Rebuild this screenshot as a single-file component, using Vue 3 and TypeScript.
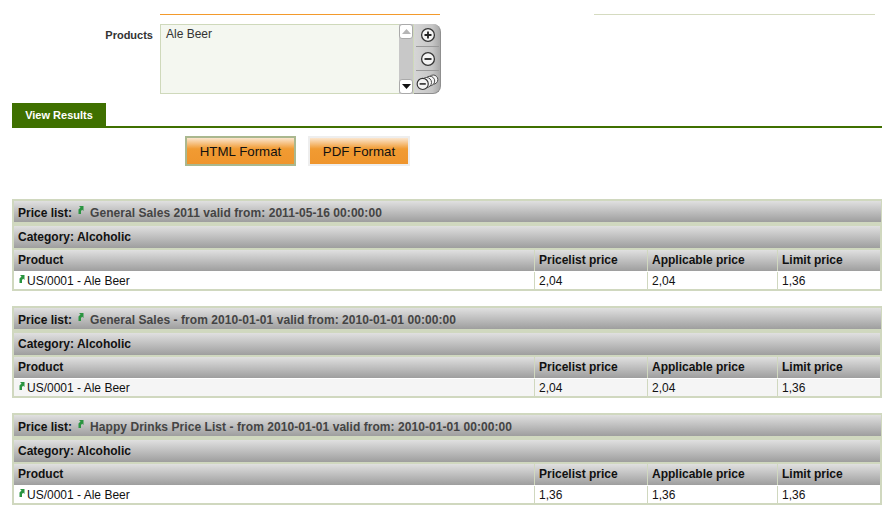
<script setup lang="ts">
interface PriceList { name: string; from: string; price: string; applicable: string; limit: string; shaded?: boolean }
const lists: PriceList[] = [
  { name: 'General Sales 2011', from: '2011-05-16 00:00:00', price: '2,04', applicable: '2,04', limit: '1,36' },
  { name: 'General Sales - from 2010-01-01', from: '2010-01-01 00:00:00', price: '2,04', applicable: '2,04', limit: '1,36', shaded: true },
  { name: 'Happy Drinks Price List - from 2010-01-01', from: '2010-01-01 00:00:00', price: '1,36', applicable: '1,36', limit: '1,36' },
]
</script>

<template>
  <div class="page">
    <div class="top-lines">
      <div class="line-orange"></div>
      <div class="line-pale"></div>
    </div>
    <div class="field">
      <label class="field-label">Products</label>
      <div class="listbox">
        <div class="listbox-text">Ale Beer</div>
        <div class="scroll">
          <div class="scroll-btn"><svg width="9" height="5" viewBox="0 0 9 5"><path d="M4.5 0 9 5H0z" fill="#b5b5b5"/></svg></div>
          <div class="scroll-track"></div>
          <div class="scroll-btn"><svg width="9" height="5" viewBox="0 0 9 5"><path d="M0 0h9L4.5 5z" fill="#111"/></svg></div>
        </div>
      </div>
      <div class="tools">
        <div class="tool">
          <svg width="16" height="16" viewBox="0 0 16 16"><circle cx="8" cy="8" r="6.400" fill="#f4f4f4" stroke="#333" stroke-width="1.300"/><path d="M4.500 8h7M8 4.500v7" stroke="#222" stroke-width="1.800"/></svg>
        </div>
        <div class="tool">
          <svg width="16" height="16" viewBox="0 0 16 16"><circle cx="8" cy="8" r="6.400" fill="#f4f4f4" stroke="#333" stroke-width="1.300"/><path d="M4.500 8h7" stroke="#222" stroke-width="1.800"/></svg>
        </div>
        <div class="tool tool-last">
          <svg width="24" height="18" viewBox="0 0 24 18"><circle cx="18" cy="6.500" r="4.800" fill="#f4f4f4" stroke="#444"/><circle cx="14.500" cy="8" r="5" fill="#f4f4f4" stroke="#444"/><circle cx="11" cy="9.500" r="5.200" fill="#f4f4f4" stroke="#444"/><circle cx="7" cy="11" r="5.800" fill="#f4f4f4" stroke="#333" stroke-width="1.200"/><path d="M3.800 11h6.400" stroke="#222" stroke-width="1.600"/></svg>
        </div>
      </div>
    </div>

    <div class="tabbar"><div class="tab">View Results</div></div>

    <div class="actions">
      <button class="btn btn-active">HTML Format</button>
      <button class="btn">PDF Format</button>
    </div>

    <div class="results">
      <section v-for="l in lists" :key="l.name" class="plist">
        <div class="plist-title">
          <b>Price list:</b>
          <svg class="arrow arrow-title" width="7" height="8" viewBox="0 0 7 8"><path d="M2 0H6.500V5L5.200 3.800 4 5V8H1.500V3.500L3.500 1.500z" fill="#2a9440"/></svg>
          <span class="plist-name">{{ l.name }} valid from: {{ l.from }}</span>
        </div>
        <div class="plist-body">
          <div class="plist-cat">Category: Alcoholic</div>
          <div class="grid head">
            <div>Product</div><div>Pricelist price</div><div>Applicable price</div><div>Limit price</div>
          </div>
          <div class="grid row" :class="{ shaded: l.shaded }">
            <div><svg class="arrow arrow-row" width="7" height="8" viewBox="0 0 7 8"><path d="M2 0H6.500V5L5.200 3.800 4 5V8H1.500V3.500L3.500 1.500z" fill="#2a9440"/></svg>US/0001 - Ale Beer</div>
            <div>{{ l.price }}</div><div>{{ l.applicable }}</div><div>{{ l.limit }}</div>
          </div>
        </div>
      </section>
    </div>
  </div>
</template>

<style scoped>
.page, .page * { box-sizing: border-box; }
.page { width: 887px; height: 519px; overflow: hidden; background: #fff; font-family: "Liberation Sans", Arial, sans-serif; font-size: 12px; color: #111; }
.top-lines { display: flex; height: 15px; padding: 14px 0 0 160px; }
.line-orange { width: 280px; height: 1px; background: #f39a2b; }
.line-pale { width: 281px; height: 1px; margin-left: 154px; background: #d5dbc0; }
.field { display: flex; margin-top: 9px; height: 70px; }
.field-label { width: 153px; padding-top: 5px; text-align: right; font-weight: bold; font-size: 11px; color: #333; margin-right: 7px; }
.listbox { width: 254px; border: 1px solid #cfd9bb; background: #f4f7f0; display: flex; justify-content: space-between; }
.listbox-text { padding: 2px 5px; color: #333; font-size: 12px; }
.scroll { width: 14px; display: flex; flex-direction: column; background: #c8c8c8; margin: -1px 0; }
.scroll-btn { height: 15px; background: #fff; border: 1px solid #aaa; border-radius: 3px; display: flex; align-items: center; justify-content: center; }
.scroll-track { flex: 1; }
.tools { width: 27px; height: 70px; display: flex; flex-direction: column; border-radius: 0 8px 8px 0; background: linear-gradient(90deg, #d6d6d6, #c6c6c6 70%, #a8a8a8); border-right: 1px solid #8f8f8f; border-bottom: 1px solid #8f8f8f; }
.tool { height: 23px; display: flex; align-items: center; justify-content: center; border-bottom: 1px solid #999; margin: 0 1px 0 2px; }
.tool + .tool { height: 24px; }
.tool-last { border-bottom: 0; height: 22px !important; }
.tabbar { margin: 9px 5px 0 12px; border-bottom: 2px solid #3f7000; height: 25px; }
.tab { width: 94px; height: 23px; line-height: 24px; background: #3f7000; color: #fff; font-weight: bold; font-size: 11px; text-align: center; }
.actions { display: flex; gap: 12px; padding: 8px 0 0 185px; }
.btn { height: 30px; padding: 1px 0 0; border: 2px solid #eee; background: linear-gradient(#fbe6cf, #f19b32 42%, #ef952d); font-family: inherit; font-size: 13.3px; color: #111; width: 102px; }
.btn-active { width: 111px; border-color: #aab88f; }
.results { margin: 33px 5px 0 12px; display: flex; flex-direction: column; gap: 15px; }
.plist { height: 92px; }
.plist-title { height: 23px; line-height: 24px; border: 2px solid #d0d8bf; border-width: 2px 1px 0 2px; padding-left: 4px; background: linear-gradient(#e0e0e0, #9e9e9e); font-size: 12px; }
.plist-title b { color: #111; margin-right: 5px; }
.plist-name { color: #444; font-weight: bold; margin-left: 4px; letter-spacing: 0.06px; }
.arrow { margin-right: 2px; }
.arrow-title { vertical-align: 3px; }
.arrow-row { vertical-align: 2px; }
.plist-body { border: 1px solid #d0d8bf; border-width: 4px 2px 2px 2px; }
.plist-cat { height: 22px; line-height: 23px; padding-left: 4px; font-weight: bold; font-size: 12px; background: linear-gradient(#e0e0e0, #9e9e9e); }
.grid { display: grid; grid-template-columns: 520px 113px 130px 103px; }
.grid > div { padding-left: 4px; }
.grid > div + div { border-left: 1px solid #d0d8bf; }
.head { height: 23px; border-top: 2px solid #d0d8bf; font-weight: bold; font-size: 12px; line-height: 20px; }
.head > div { background: linear-gradient(#e0e0e0, #9e9e9e); }
.row { height: 18px; line-height: 18px; background: #fff; border-top: 1px solid #fff; font-size: 12px; }
.row.shaded { background: #f5f5f5; }
</style>
